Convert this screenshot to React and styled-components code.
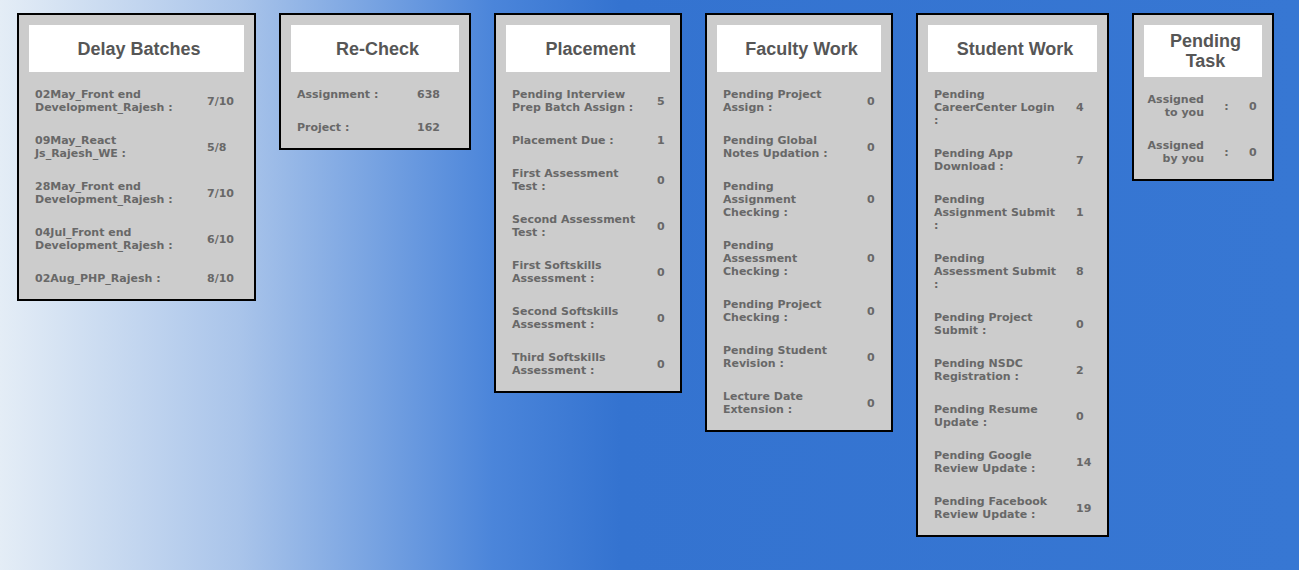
import React from "react";
import styled, { createGlobalStyle } from "styled-components";

const Global = createGlobalStyle`
  html, body { margin: 0; padding: 0; }
  body {
    min-height: 570px;
    background: linear-gradient(90deg,
      #e4edf6 0px,
      #a9c4ea 240px,
      #4b85da 493px,
      #3473d0 620px,
      #3777d3 100%);
    font-family: "DejaVu Sans", Verdana, sans-serif;
  }
`;

const Board = styled.div`
  display: flex;
  align-items: flex-start;
  gap: 23px;
  padding: 13px 0 0 17px;
  min-height: 557px;
`;

const Card = styled.section`
  box-sizing: border-box;
  width: ${(p) => p.$w}px;
  border: 2px solid #000;
  background: #cccccc;
  padding: 10px;
  flex: none;
`;

const Title = styled.h2`
  margin: 0;
  box-sizing: border-box;
  min-height: 47px;
  padding: 6px 4px 6px 9px;
  background: #fff;
  display: flex;
  align-items: center;
  justify-content: center;
  text-align: center;
  font-family: "Liberation Sans", Arial, sans-serif;
  font-weight: 700;
  font-size: 18px;
  line-height: 20px;
  color: #565656;
`;

const Stats = styled.div`
  display: grid;
  grid-template-columns: ${(p) => p.$label}px auto;
  column-gap: ${(p) => p.$gap}px;
  row-gap: 20px;
  align-items: center;
  margin-top: 16px;
  padding: 0 0 4px 6px;
  font-size: 11px;
  line-height: 13px;
  font-weight: 700;
  color: #686868;
`;

const Label = styled.div``;

const Value = styled.div`
  white-space: nowrap;
`;

const TaskStats = styled.div`
  display: grid;
  grid-template-columns: 60px 45px auto;
  row-gap: 20px;
  align-items: center;
  margin-top: 16px;
  padding-bottom: 4px;
  font-size: 11px;
  line-height: 13px;
  font-weight: 700;
  color: #686868;
`;

const TaskLabel = styled.div`
  text-align: right;
`;

const Colon = styled.div`
  text-align: center;
`;

const cards = [
  {
    title: "Delay Batches",
    w: 239,
    label: 155,
    gap: 17,
    rows: [
      ["02May_Front end Development_Rajesh :", "7/10"],
      ["09May_React Js_Rajesh_WE :", "5/8"],
      ["28May_Front end Development_Rajesh :", "7/10"],
      ["04Jul_Front end Development_Rajesh :", "6/10"],
      ["02Aug_PHP_Rajesh :", "8/10"],
    ],
  },
  {
    title: "Re-Check",
    w: 192,
    label: 100,
    gap: 20,
    rows: [
      ["Assignment :", "638"],
      ["Project :", "162"],
    ],
  },
  {
    title: "Placement",
    w: 188,
    label: 130,
    gap: 15,
    rows: [
      ["Pending Interview Prep Batch Assign :", "5"],
      ["Placement Due :", "1"],
      ["First Assessment Test :", "0"],
      ["Second Assessment Test :", "0"],
      ["First Softskills Assessment :", "0"],
      ["Second Softskills Assessment :", "0"],
      ["Third Softskills Assessment :", "0"],
    ],
  },
  {
    title: "Faculty Work",
    w: 188,
    label: 115,
    gap: 29,
    rows: [
      ["Pending Project Assign :", "0"],
      ["Pending Global Notes Updation :", "0"],
      ["Pending Assignment Checking :", "0"],
      ["Pending Assessment Checking :", "0"],
      ["Pending Project Checking :", "0"],
      ["Pending Student Revision :", "0"],
      ["Lecture Date Extension :", "0"],
    ],
  },
  {
    title: "Student Work",
    w: 193,
    label: 123,
    gap: 19,
    rows: [
      ["Pending CareerCenter Login :", "4"],
      ["Pending App Download :", "7"],
      ["Pending Assignment Submit :", "1"],
      ["Pending Assessment Submit :", "8"],
      ["Pending Project Submit :", "0"],
      ["Pending NSDC Registration :", "2"],
      ["Pending Resume Update :", "0"],
      ["Pending Google Review Update :", "14"],
      ["Pending Facebook Review Update :", "19"],
    ],
  },
];

const tasks = [
  ["Assigned to you", "0"],
  ["Assigned by you", "0"],
];

export default function App() {
  return (
    <>
      <Global />
      <Board>
        {cards.map((c) => (
          <Card key={c.title} $w={c.w}>
            <Title>{c.title}</Title>
            <Stats $label={c.label} $gap={c.gap}>
              {c.rows.map(([l, v]) => (
                <React.Fragment key={l}>
                  <Label>{l}</Label>
                  <Value>{v}</Value>
                </React.Fragment>
              ))}
            </Stats>
          </Card>
        ))}
        <Card $w={142}>
          <Title>Pending Task</Title>
          <TaskStats>
            {tasks.map(([l, v]) => (
              <React.Fragment key={l}>
                <TaskLabel>{l}</TaskLabel>
                <Colon>:</Colon>
                <Value>{v}</Value>
              </React.Fragment>
            ))}
          </TaskStats>
        </Card>
      </Board>
    </>
  );
}
